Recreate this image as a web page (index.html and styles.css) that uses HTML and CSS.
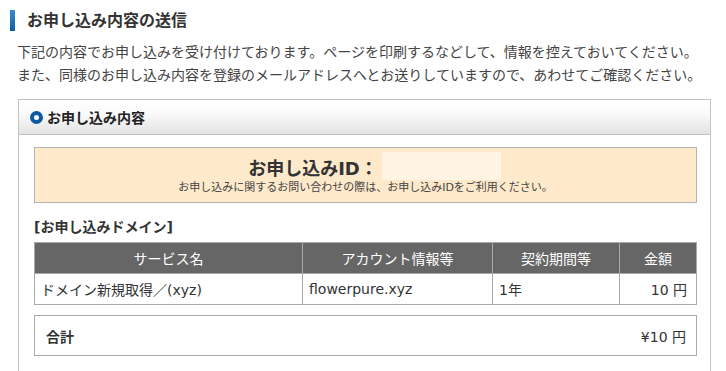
FILE: index.html
```html
<!DOCTYPE html>
<html lang="ja">
<head>
  <meta charset="UTF-8">
  <title>お申し込み内容の送信</title>
  <link rel="stylesheet" href="styles.css">
</head>
<body>
  <div class="page">
    <h2 class="page-title">お申し込み内容の送信</h2>
    <p class="lead">
      下記の内容でお申し込みを受け付けております。ページを印刷するなどして、情報を控えておいてください。<br>
      また、同様のお申し込み内容を登録のメールアドレスへとお送りしていますので、あわせてご確認ください。
    </p>

    <div class="panel">
      <div class="panel-head">
        <span class="dot"></span>お申し込み内容
      </div>
      <div class="panel-body">
        <div class="order-id">
          <div class="order-id-title">お申し込みID：<span class="order-id-value"></span></div>
          <div class="order-id-note">お申し込みに関するお問い合わせの際は、お申し込みIDをご利用ください。</div>
        </div>

        <h3 class="sub-title">[お申し込みドメイン]</h3>
        <table class="items">
          <thead>
            <tr>
              <th class="col-name">サービス名</th>
              <th class="col-account">アカウント情報等</th>
              <th class="col-term">契約期間等</th>
              <th class="col-price">金額</th>
            </tr>
          </thead>
          <tbody>
            <tr>
              <td>ドメイン新規取得／(xyz)</td>
              <td>flowerpure.xyz</td>
              <td>1年</td>
              <td class="price">10 円</td>
            </tr>
          </tbody>
        </table>

        <div class="total">
          <span class="total-label">合計</span>
          <span class="total-value">¥10 円</span>
        </div>
      </div>
    </div>
  </div>
</body>
</html>
```

FILE: styles.css
```css
body {
  margin: 0;
  font-family: "DejaVu Sans", "Noto Sans CJK JP", sans-serif;
  color: #444;
  background: #fff;
}
.page {
  padding: 10px 15px 0 10px;
}
.page-title {
  margin: 0;
  height: 21px;
  padding-left: 12px;
  border-left: 5px solid #1d6cb3;
  border-image: linear-gradient(#3d8ed6, #0d5aa0) 1;
  font-size: 16px;
  line-height: 22px;
  font-weight: bold;
  color: #333;
}
.lead {
  margin: 10px 0 0 7px;
  font-size: 14px;
  line-height: 23px;
  color: #444;
}
.panel {
  margin: 12px 0 0 8px;
  width: 691px;
  height: 300px;
  border: 1px solid #c4c4c4;
  border-bottom: none;
}
.panel-head {
  display: flex;
  align-items: center;
  height: 34px;
  padding-left: 11px;
  border-bottom: 1px solid #c4c4c4;
  background: linear-gradient(#fff 0%, #fafafa 40%, #e3e3e3 100%);
  font-size: 14px;
  font-weight: bold;
  color: #222;
}
.dot {
  width: 5px;
  height: 5px;
  margin-right: 4px;
  border: 4px solid #0d5aa0;
  border-radius: 50%;
  background: #fff;
}
.panel-body {
  padding: 12px 13px 0 15px;
}
.order-id {
  height: 54px;
  border: 1px solid #b5b5b5;
  background: #fee9cb;
  text-align: center;
}
.order-id-title {
  display: flex;
  justify-content: center;
  align-items: center;
  padding-top: 6px;
  padding-left: 18px;
  height: 26px;
  font-size: 18px;
  font-weight: bold;
  color: #333;
}
.order-id-value {
  display: inline-block;
  width: 119px;
  height: 28px;
  margin-left: 4px;
  margin-top: -2px;
  background: #fff3e4;
}
.order-id-note {
  margin-top: 0;
  font-size: 11px;
  line-height: 16px;
  color: #444;
}
.sub-title {
  margin: 14px 0 0;
  font-size: 14px;
  line-height: 20px;
  font-weight: bold;
  color: #333;
}
.items {
  width: 100%;
  margin-top: 5px;
  border-collapse: collapse;
  font-size: 14px;
}
.items th, .items td {
  height: 30px;
  padding: 0 6px;
  border: 1px solid #aaa;
  text-align: left;
  font-weight: normal;
}
.items th {
  background: #666;
  color: #fff;
  text-align: center;
}
.items td {
  color: #333;
}
.col-name { width: 255px; }
.col-account { width: 177px; }
.col-term { width: 114px; }
.items .price {
  text-align: right;
  padding-right: 9px;
}
.total {
  display: flex;
  justify-content: space-between;
  align-items: center;
  height: 39px;
  margin-top: 10px;
  padding: 0 10px 0 11px;
  border: 1px solid #aaa;
  font-size: 14px;
  color: #333;
}
.total-label {
  font-weight: bold;
}
```
